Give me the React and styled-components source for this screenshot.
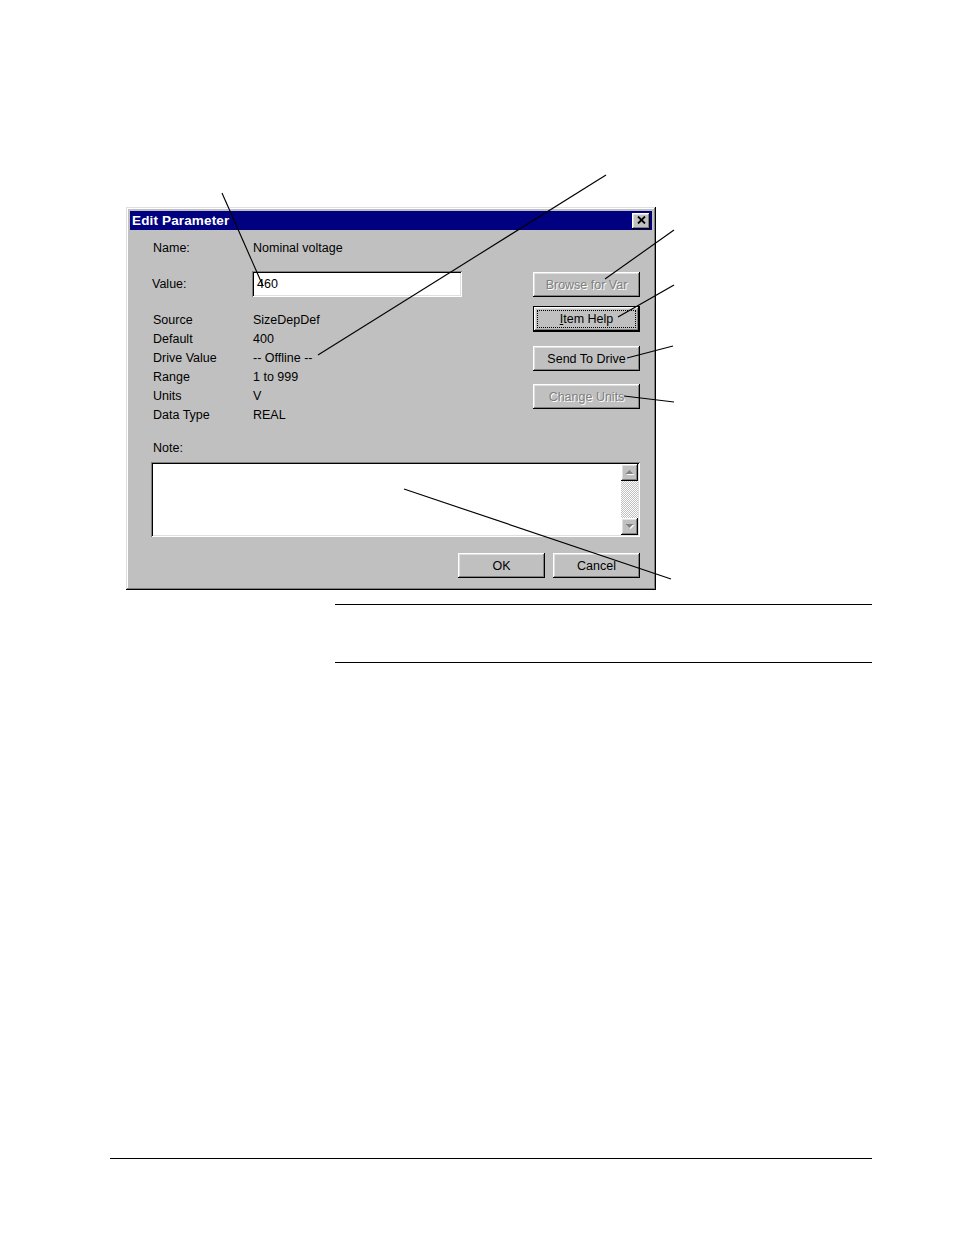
import React from "react";
import styled, { createGlobalStyle, css } from "styled-components";

const GlobalStyle = createGlobalStyle`
  html, body { margin: 0; padding: 0; background: #fff; }
  body { font-family: "Liberation Sans", Arial, sans-serif; color: #000; }
  * { box-sizing: border-box; }
`;

const Page = styled.div`
  position: relative;
  width: 954px;
  height: 1235px;
  padding-top: 207px;
  overflow: hidden;
`;

const raised = css`
  box-shadow: inset -1px -1px #000, inset 1px 1px #fff, inset -2px -2px #808080,
    inset 2px 2px #dfdfdf;
`;

const sunken = css`
  box-shadow: inset 1px 1px #808080, inset -1px -1px #fff, inset 2px 2px #000,
    inset -2px -2px #dfdfdf;
`;

const Window = styled.div`
  margin-left: 126px;
  width: 530px;
  background: #c0c0c0;
  padding: 4px;
  box-shadow: inset -1px -1px #000, inset 1px 1px #dfdfdf, inset -2px -2px #808080,
    inset 2px 2px #fff;
`;

const TitleBar = styled.div`
  height: 19px;
  background: #000080;
  display: flex;
  align-items: center;
  justify-content: space-between;
  padding: 0 2px;
`;

const TitleText = styled.span`
  color: #fff;
  font-weight: bold;
  font-size: 13.5px;
  line-height: 19px;
  letter-spacing: 0.15px;
`;

const CloseButton = styled.div`
  width: 18px;
  height: 16px;
  background: #c0c0c0;
  ${raised};
  display: flex;
  align-items: center;
  justify-content: center;
  padding-bottom: 1px;
`;

const Body = styled.div`
  padding: 8px 12px 8px 22px;
  font-size: 12.5px;
`;

const TopArea = styled.div`
  display: flex;
  justify-content: space-between;
`;

const Fields = styled.div`
  display: flex;
  flex-direction: column;
  width: 320px;
`;

const FieldRow = styled.div`
  display: flex;
  align-items: center;
  height: ${(p) => p.$h || 19}px;
  margin-top: ${(p) => p.$mt || 0}px;
`;

const Label = styled.div`
  width: 100px;
  padding-left: ${(p) => p.$indent || 0}px;
  white-space: nowrap;
`;

const Value = styled.div`
  white-space: nowrap;
  padding-left: ${(p) => p.$indent || 0}px;
`;

const TextBox = styled.div`
  width: 210px;
  height: 26px;
  background: #fff;
  ${sunken};
  display: flex;
  align-items: center;
  padding-left: 5px;
`;

const InfoGrid = styled.div`
  display: grid;
  grid-template-columns: 100px auto;
  grid-auto-rows: 19px;
  align-items: center;
  margin-top: 13px;
  & > div { padding-left: 1px; white-space: nowrap; }
`;

const ButtonColumn = styled.div`
  display: flex;
  flex-direction: column;
  width: 107px;
  padding-top: 34px;
`;

const Button = styled.div`
  position: relative;
  width: ${(p) => p.$w || 107}px;
  height: ${(p) => (p.$default ? 26 : 25)}px;
  margin-top: ${(p) => p.$mt || 0}px;
  background: #c0c0c0;
  display: flex;
  align-items: center;
  justify-content: center;
  white-space: nowrap;
  font-size: 12.5px;
  ${(p) =>
    p.$default
      ? css`
          border: 1px solid #000;
          box-shadow: inset -1px -1px #000, inset 1px 1px #fff,
            inset -2px -2px #808080, inset 2px 2px #dfdfdf;
          &::after {
            content: "";
            position: absolute;
            inset: 3px;
            border: 1px dotted #000;
          }
        `
      : raised};
  ${(p) =>
    p.$disabled &&
    css`
      color: #808080;
      text-shadow: 1px 1px 0 #fff;
    `}
`;

const NoteLabel = styled.div`
  height: 19px;
  display: flex;
  align-items: center;
  margin-top: 14px;
  padding-left: 1px;
`;

const NoteBox = styled.div`
  margin-top: 5px;
  margin-left: -1px;
  width: 489px;
  height: 75px;
  ${sunken};
  background: #fff;
  padding: 2px;
  display: flex;
`;

const NoteArea = styled.div`
  flex: 1;
  background: #fff;
`;

const Scrollbar = styled.div`
  width: 17px;
  display: flex;
  flex-direction: column;
`;

const ScrollButton = styled.div`
  width: 17px;
  height: 17px;
  background: #c0c0c0;
  ${raised};
  display: flex;
  align-items: center;
  justify-content: center;
`;

const ScrollTrack = styled.div`
  flex: 1;
  background-color: #fff;
  background-image: repeating-conic-gradient(#c0c0c0 0 25%, #fff 0 50%);
  background-size: 2px 2px;
`;

const Footer = styled.div`
  display: flex;
  justify-content: flex-end;
  gap: 8px;
  margin-top: 16px;
`;

const Rule = styled.div`
  height: 1px;
  background: #000;
  width: ${(p) => p.$w}px;
  margin-left: ${(p) => p.$left}px;
  margin-top: ${(p) => p.$mt}px;
`;

const Callouts = styled.svg`
  position: absolute;
  left: 0;
  top: 0;
  pointer-events: none;
`;

const Arrow = ({ up }) => (
  <svg width="10" height="7" viewBox="0 0 10 7">
    {up ? (
      <>
        <polygon points="4.5,1 8.5,5 0.5,5" fill="#fff" transform="translate(1,1)" />
        <polygon points="4.5,1 8.5,5 0.5,5" fill="#808080" />
      </>
    ) : (
      <>
        <polygon points="0.5,1 8.5,1 4.5,5" fill="#fff" transform="translate(1,1)" />
        <polygon points="0.5,1 8.5,1 4.5,5" fill="#808080" />
      </>
    )}
  </svg>
);

const CloseGlyph = () => (
  <svg width="9" height="8" viewBox="0 0 9 8">
    <path d="M1 0.5 L8 7.5 M8 0.5 L1 7.5" stroke="#000" strokeWidth="1.8" />
  </svg>
);

const info = [
  ["Source", "SizeDepDef"],
  ["Default", "400"],
  ["Drive Value", "-- Offline --"],
  ["Range", "1 to 999"],
  ["Units", "V"],
  ["Data Type", "REAL"],
];

const lines = [
  [222, 193, 263, 286],
  [606, 175, 318, 355],
  [674, 230, 605, 279],
  [674, 285, 618, 317],
  [673, 346, 627, 358],
  [624, 396, 674, 402],
  [404, 489, 671, 579],
];

export default function App() {
  return (
    <>
      <GlobalStyle />
      <Page>
        <Window>
          <TitleBar>
            <TitleText>Edit Parameter</TitleText>
            <CloseButton>
              <CloseGlyph />
            </CloseButton>
          </TitleBar>
          <Body>
            <TopArea>
              <Fields>
                <FieldRow>
                  <Label $indent={1}>Name:</Label>
                  <Value $indent={1}>Nominal voltage</Value>
                </FieldRow>
                <FieldRow $h={26} $mt={14}>
                  <Label>Value:</Label>
                  <TextBox>460</TextBox>
                </FieldRow>
                <InfoGrid>
                  {info.map(([k, v]) => (
                    <React.Fragment key={k}>
                      <div>{k}</div>
                      <div>{v}</div>
                    </React.Fragment>
                  ))}
                </InfoGrid>
              </Fields>
              <ButtonColumn>
                <Button $disabled>Browse for Var</Button>
                <Button $default $mt={9}>
                  <span>
                    <u>I</u>tem Help
                  </span>
                </Button>
                <Button $mt={14}>Send To Drive</Button>
                <Button $disabled $mt={13}>
                  Change Units
                </Button>
              </ButtonColumn>
            </TopArea>
            <NoteLabel>Note:</NoteLabel>
            <NoteBox>
              <NoteArea />
              <Scrollbar>
                <ScrollButton>
                  <Arrow up />
                </ScrollButton>
                <ScrollTrack />
                <ScrollButton>
                  <Arrow />
                </ScrollButton>
              </Scrollbar>
            </NoteBox>
            <Footer>
              <Button $w={87}>OK</Button>
              <Button $w={87}>Cancel</Button>
            </Footer>
          </Body>
        </Window>
        <Rule $w={537} $left={335} $mt={14} />
        <Rule $w={537} $left={335} $mt={57} />
        <Rule $w={762} $left={110} $mt={495} />
        <Callouts width="954" height="1235" viewBox="0 0 954 1235">
          {lines.map(([x1, y1, x2, y2], i) => (
            <line key={i} x1={x1} y1={y1} x2={x2} y2={y2} stroke="#000" strokeWidth="1.15" />
          ))}
        </Callouts>
      </Page>
    </>
  );
}
